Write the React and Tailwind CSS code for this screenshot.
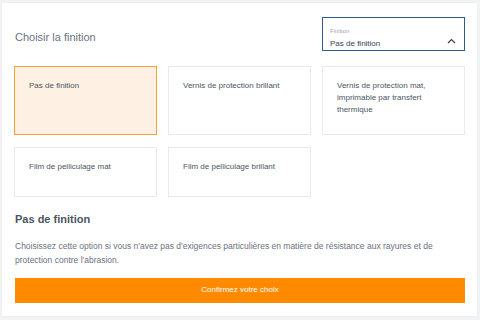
import React, { useState } from 'react';

const options = [
  'Pas de finition',
  'Vernis de protection brillant',
  'Vernis de protection mat, imprimable par transfert thermique',
  'Film de pelliculage mat',
  'Film de pelliculage brillant',
];

const App = () => {
  const [selected, setSelected] = useState(0);

  return (
    <div
      className="w-[480px] h-[320px] bg-[#f2f3f5] pt-[3px] pl-[2px]"
      style={{ fontFamily: '"Liberation Sans", Arial, sans-serif' }}
    >
      <div className="w-[475px] h-[313px] bg-white px-3 pt-[14px] shadow-[0_0_2px_rgba(0,0,0,0.06)]">
        <div className="flex items-center justify-between">
          <h2 className="text-[11px] text-[#6b7280] pl-[1px] mt-[6px]">Choisir la finition</h2>
          <div className="w-[143px] h-[34px] border-[1.5px] border-[#2e5a96] px-[7px] pt-[8px] flex items-end justify-between">
            <div className="leading-none">
              <div className="text-[6px] text-[#9ca3af]">Finition</div>
              <div className="text-[8px] text-[#374151] mt-[6px] pb-[2px]">Pas de finition</div>
            </div>
            <svg width="9" height="6" viewBox="0 0 9 6" className="mb-[6px] mr-[1px]">
              <path d="M1 5 L4.5 1.5 L8 5" fill="none" stroke="#374151" strokeWidth="1.2" />
            </svg>
          </div>
        </div>

        <div className="grid grid-cols-3 gap-x-[11px] gap-y-[12px] mt-[15px]">
          {options.map((opt, i) => (
            <button
              key={opt}
              onClick={() => setSelected(i)}
              className={
                (i < 3 ? 'h-[69px] ' : 'h-[50px] ') +
                'text-left align-top flex items-start pl-[14px] pr-[16px] pt-[13px] text-[8px] leading-[12px] text-[#4b5563] ' +
                (selected === i
                  ? 'border-[1.5px] border-[#f5a03a] bg-[#fef1e4]'
                  : 'border border-[#e8eaed] bg-white')
              }
            >
              {opt}
            </button>
          ))}
        </div>

        <h3 className="mt-[14px] text-[11px] font-bold text-[#4b5563] pl-[1px]">Pas de finition</h3>
        <p className="mt-[11px] text-[8.5px] leading-[14px] text-[#6b7280] pl-[1px]">
          Choisissez cette option si vous n'avez pas d'exigences particulières en matière de résistance aux rayures et de protection contre l'abrasion.
        </p>

        <button className="mt-[11px] w-[450px] ml-[1px] h-[25px] bg-[#ff8a00] text-white text-[8px] flex items-center justify-center">
          Confirmez votre choix
        </button>
      </div>
    </div>
  );
};

export default App;
